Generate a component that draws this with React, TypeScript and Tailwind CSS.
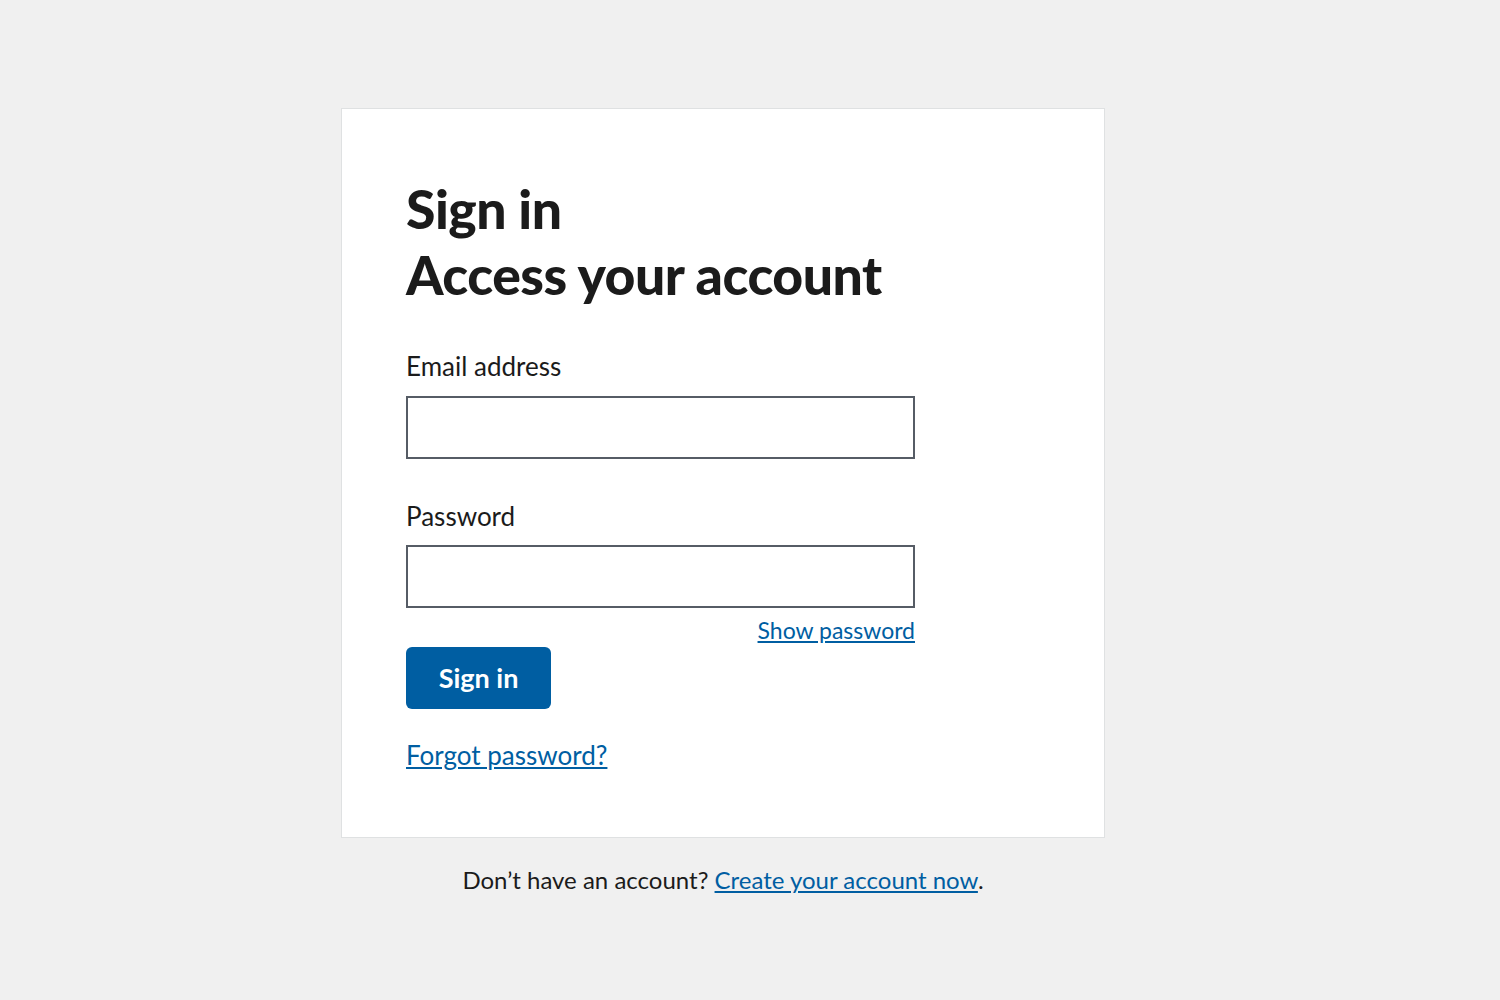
export default function App() {
  return (
    <div className="min-h-[1000px] bg-[#f0f0f0] pt-[108px] font-['Lato',sans-serif] text-[#1b1b1b]">
      <div className="ml-[341px] w-[764px]">
        <div className="border border-[#dfe1e2] bg-white px-[64px] pb-[64px] pt-[66px]">
          <h1 className="text-[53.5px] font-black leading-[66px] tracking-[-0.5px]">
            Sign in
            <br />
            Access your account
          </h1>

          <form className="mt-[41px] w-[509px]" onSubmit={(e) => e.preventDefault()}>
            <label className="block text-[26px] leading-[36px]">Email address</label>
            <input
              type="email"
              className="mt-[12px] block h-[63px] w-full border-2 border-[#565c65] bg-white px-3 text-[25px] outline-none"
            />

            <label className="mt-[39px] block text-[26px] leading-[36px]">Password</label>
            <input
              type="password"
              className="mt-[11px] block h-[63px] w-full border-2 border-[#565c65] bg-white px-3 text-[25px] outline-none"
            />
            <div className="mt-[8px] flex justify-end">
              <a href="#" className="text-[23px] leading-[28px] text-[#005ea2] underline underline-offset-2">
                Show password
              </a>
            </div>

            <button
              type="submit"
              className="mt-[3px] flex h-[62px] w-[145px] items-center justify-center rounded-[6px] bg-[#005ea2] text-[27px] font-bold text-white"
            >
              Sign in
            </button>

            <div className="mt-[28px]">
              <a href="#" className="text-[26px] leading-[36px] text-[#005ea2] underline underline-offset-2">
                Forgot password?
              </a>
            </div>
          </form>
        </div>

        <p className="mt-[24px] text-center text-[24px] leading-[36px]">
          Don’t have an account?{' '}
          <a href="#" className="text-[#005ea2] underline underline-offset-2">
            Create your account now
          </a>
          .
        </p>
      </div>
    </div>
  );
}
